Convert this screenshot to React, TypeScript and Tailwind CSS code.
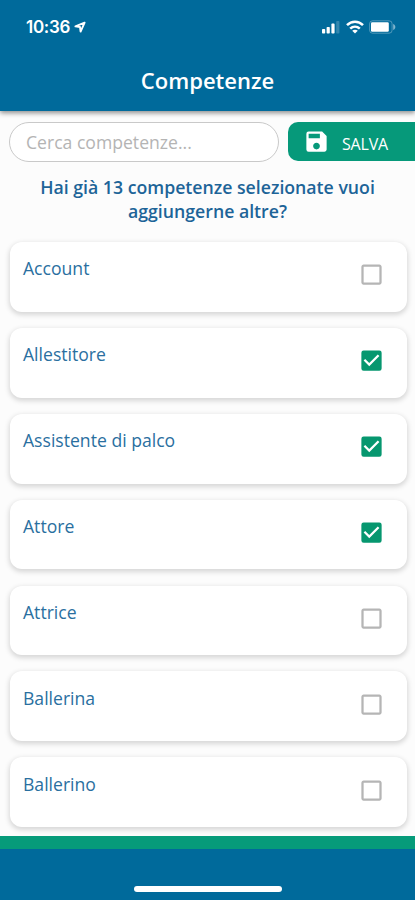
import { MdCheckBox, MdCheckBoxOutlineBlank, MdSave } from "react-icons/md";

const skills = [
  { name: "Account", checked: false },
  { name: "Allestitore", checked: true },
  { name: "Assistente di palco", checked: true },
  { name: "Attore", checked: true },
  { name: "Attrice", checked: false },
  { name: "Ballerina", checked: false },
  { name: "Ballerino", checked: false },
];

function StatusBar() {
  return (
    <div className="flex h-[54px] items-center justify-between pl-[26px] pr-[19px]">
      <div className="flex items-center gap-[4px]">
        <span className="font-['Inter',sans-serif] text-[17px] font-semibold leading-none tracking-[-0.3px]">10:36</span>
        <svg width="12" height="12" viewBox="0 0 12 12" fill="none" stroke="currentColor" strokeWidth="1.9" strokeLinejoin="round">
          <path d="M10.6 1.6 1.4 5.4 6 6 6.6 10.6Z" />
        </svg>
      </div>
      <div className="flex items-center gap-[5px]">
        <svg width="20" height="14" viewBox="0 0 20 14" fill="currentColor">
          <rect x="1" y="9" width="3.2" height="4.5" rx="0.8" />
          <rect x="5.6" y="7" width="3.2" height="6.5" rx="0.8" />
          <rect x="10.4" y="3.6" width="3.2" height="9.9" rx="0.8" />
          <rect x="15.2" y="1" width="3.2" height="12.5" rx="0.8" opacity="0.2" />
        </svg>
        <svg width="18" height="14" viewBox="0 0 18 14" fill="none" stroke="currentColor" strokeWidth="2.5">
          <path d="M1 5.2C5.5 .6 12.5 .6 17 5.2" />
          <path d="M4.2 8.6C7 6 11 6 13.8 8.6" />
          <path d="M9 13.5 6.2 10.7C7.8 9.3 10.2 9.3 11.8 10.7Z" fill="currentColor" stroke="none" />
        </svg>
        <svg width="27" height="14" viewBox="0 0 27 14" fill="currentColor">
          <rect x="0.6" y="0.8" width="22.5" height="12.4" rx="3" fill="none" stroke="currentColor" opacity="0.3" />
          <rect x="2" y="2.2" width="17.8" height="9.6" rx="1.2" />
          <path d="M24.2 4C27 5 27 9 24.2 10Z" opacity="0.5" />
        </svg>
      </div>
    </div>
  );
}

function SkillCard({ name, checked }: { name: string; checked: boolean }) {
  return (
    <li className="flex h-[69.8px] items-start justify-between rounded-[12px] bg-white pl-[13px] pr-[22px] shadow-[0_2px_5px_1px_rgba(0,0,0,0.15)]">
      <span className="mt-[14.2px] text-[17.6px] leading-6 text-[#2a6f9f]">{name}</span>
      {checked ? (
        <MdCheckBox size={27} className="mt-[19.3px] text-[#06976f]" />
      ) : (
        <MdCheckBoxOutlineBlank size={27} className="mt-[19.3px] text-[#b5b5b5]" />
      )}
    </li>
  );
}

export default function App() {
  return (
    <div className="flex h-[900px] w-[415px] flex-col overflow-hidden bg-[#fcfcfc] font-['Open_Sans',sans-serif]">
      <header className="h-[111px] shrink-0 bg-[#006a9b] text-white shadow-[0_2px_5px_rgba(0,0,0,0.45)]">
        <StatusBar />
        <h1 className="text-center text-[22px] font-semibold leading-[52px]">Competenze</h1>
      </header>

      <div className="mt-[11px] flex shrink-0 gap-[9px] pl-[9px]">
        <input
          type="text"
          placeholder="Cerca competenze..."
          className="h-10 w-[270px] rounded-full border border-[#c9c9c9] bg-white px-4 pb-[1px] text-[17.6px] outline-none placeholder:text-[#b4b4b4]"
        />
        <button className="flex h-[39px] flex-1 items-center rounded-l-[10px] bg-[#06997a] pl-[15px] text-white">
          <MdSave size={27} />
          <span className="ml-3 mt-[4px] text-[16px] tracking-[-0.2px]">SALVA</span>
        </button>
      </div>

      <p className="mt-[13px] shrink-0 text-center text-[17.7px] font-semibold leading-6 text-[#1d6498]">
        Hai già 13 competenze selezionate vuoi
        <br />
        aggiungerne altre?
      </p>

      <ul className="mt-[19px] flex flex-1 flex-col gap-[16.1px] pl-[10px] pr-[8px]">
        {skills.map((skill) => (
          <SkillCard key={skill.name} {...skill} />
        ))}
      </ul>

      <footer className="flex h-16 shrink-0 items-end justify-center border-t-[13px] border-[#069b7a] bg-[#006a9b] pb-[8px]">
        <div className="h-[6px] w-[148px] rounded-full bg-white" />
      </footer>
    </div>
  );
}
